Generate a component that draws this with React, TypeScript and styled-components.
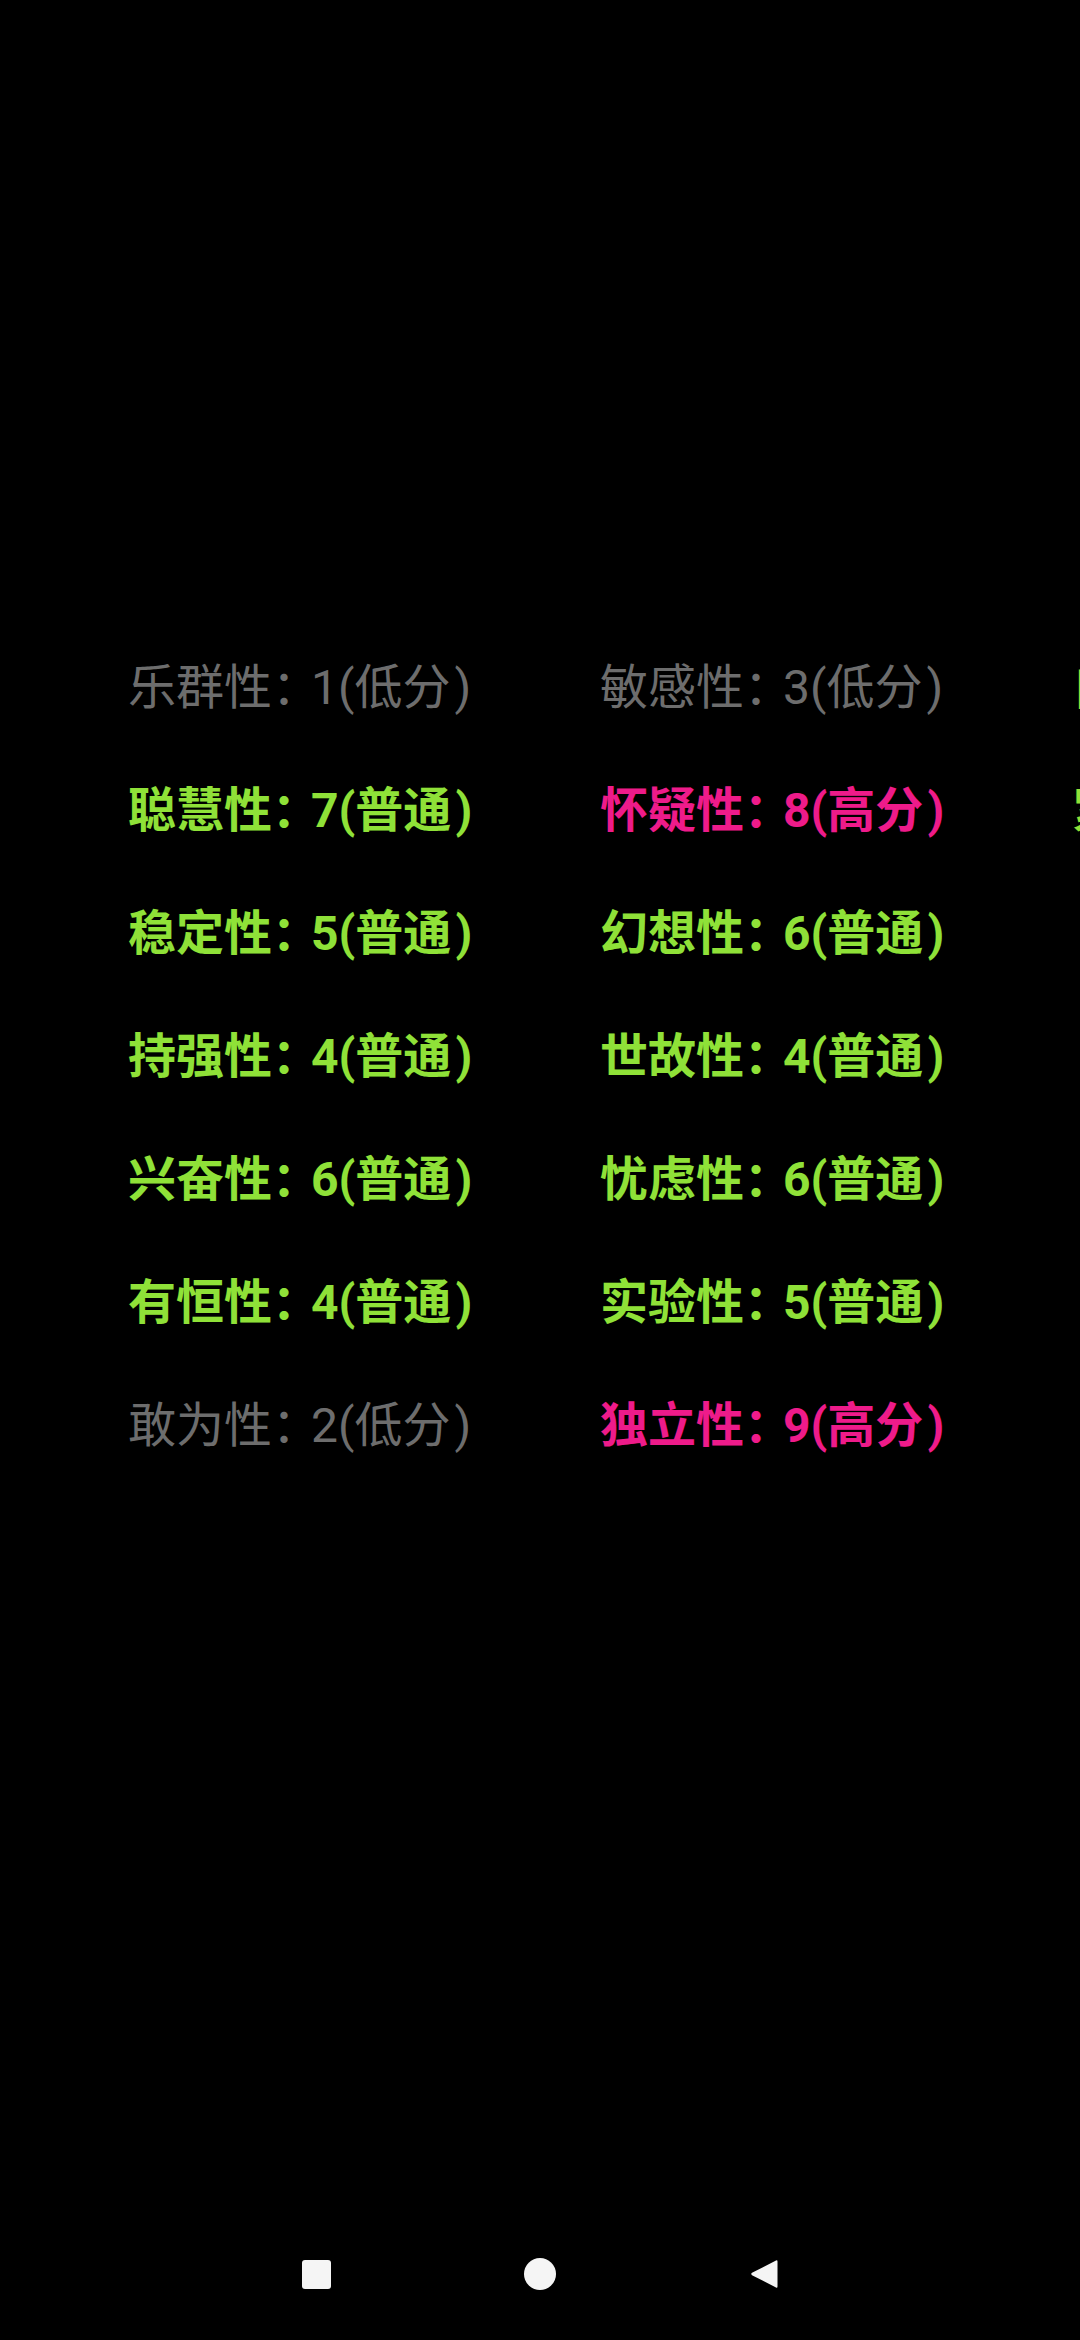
import React from "react";
import styled, { createGlobalStyle } from "styled-components";

const GlobalStyle = createGlobalStyle`
  html, body {
    margin: 0;
    padding: 0;
    background: #000;
  }
  body {
    font-family: Roboto, "Noto Sans CJK SC", sans-serif;
    overflow: hidden;
  }
`;

type Level = "low" | "normal" | "high";

const Screen = styled.div`
  width: 1080px;
  height: 2340px;
  background: #000;
  display: flex;
  flex-direction: column;
  overflow: hidden;
`;

const Main = styled.main`
  flex: 1;
  padding: 626px 0 0 128px;
  overflow: hidden;
`;

const Columns = styled.div`
  display: flex;
  width: max-content;
`;

const Column = styled.div`
  width: 472px;
  flex-shrink: 0;
  display: flex;
  flex-direction: column;
`;

const colors: Record<Level, string> = {
  low: "#6d6d6d",
  normal: "#8fe138",
  high: "#ee1b8a",
};

const Item = styled.div<{ $level: Level }>`
  height: 123px;
  line-height: 123px;
  font-size: 48px;
  white-space: nowrap;
  color: ${(p) => colors[p.$level]};
  font-weight: ${(p) => (p.$level === "low" ? 400 : 700)};
`;

const Colon = styled.span`
  letter-spacing: -9px;
`;

const CloseParen = styled.span`
  margin-left: 4px;
`;

const NavBar = styled.nav`
  height: 132px;
  display: flex;
  align-items: center;
  justify-content: center;
  gap: 144px;
`;

const NavButton = styled.div`
  width: 80px;
  height: 80px;
  display: flex;
  align-items: center;
  justify-content: center;
`;

const Square = styled.div`
  width: 29px;
  height: 29px;
  border-radius: 3px;
  background: #f5f5f5;
`;

const Circle = styled.div`
  width: 32px;
  height: 32px;
  border-radius: 50%;
  background: #f5f5f5;
`;

type Factor = { name: string; score: number };

const levelOf = (s: number): Level => (s <= 3 ? "low" : s >= 8 ? "high" : "normal");
const labelOf = (l: Level) => (l === "low" ? "低分" : l === "high" ? "高分" : "普通");

const columns: Factor[][] = [
  [
    { name: "乐群性", score: 1 },
    { name: "聪慧性", score: 7 },
    { name: "稳定性", score: 5 },
    { name: "持强性", score: 4 },
    { name: "兴奋性", score: 6 },
    { name: "有恒性", score: 4 },
    { name: "敢为性", score: 2 },
  ],
  [
    { name: "敏感性", score: 3 },
    { name: "怀疑性", score: 8 },
    { name: "幻想性", score: 6 },
    { name: "世故性", score: 4 },
    { name: "忧虑性", score: 6 },
    { name: "实验性", score: 5 },
    { name: "独立性", score: 9 },
  ],
  [
    { name: "自律性", score: 6 },
    { name: "紧张性", score: 5 },
  ],
];

export default function App() {
  return (
    <>
      <GlobalStyle />
      <Screen>
        <Main>
          <Columns>
            {columns.map((col, ci) => (
              <Column key={ci}>
                {col.map((f) => {
                  const lv = levelOf(f.score);
                  return (
                    <Item key={f.name} $level={lv}>
                      {f.name}
                      <Colon>：</Colon>
                      {f.score}({labelOf(lv)}
                      <CloseParen>)</CloseParen>
                    </Item>
                  );
                })}
              </Column>
            ))}
          </Columns>
        </Main>
        <NavBar>
          <NavButton>
            <Square />
          </NavButton>
          <NavButton>
            <Circle />
          </NavButton>
          <NavButton>
            <svg width="30" height="32" viewBox="0 0 30 32">
              <path
                d="M27 2.5 Q28.5 1.8 28.5 3.5 L28.5 28.5 Q28.5 30.2 27 29.5 L3 17.2 Q1.5 16 3 14.8 Z"
                fill="#f5f5f5"
              />
            </svg>
          </NavButton>
        </NavBar>
      </Screen>
    </>
  );
}
